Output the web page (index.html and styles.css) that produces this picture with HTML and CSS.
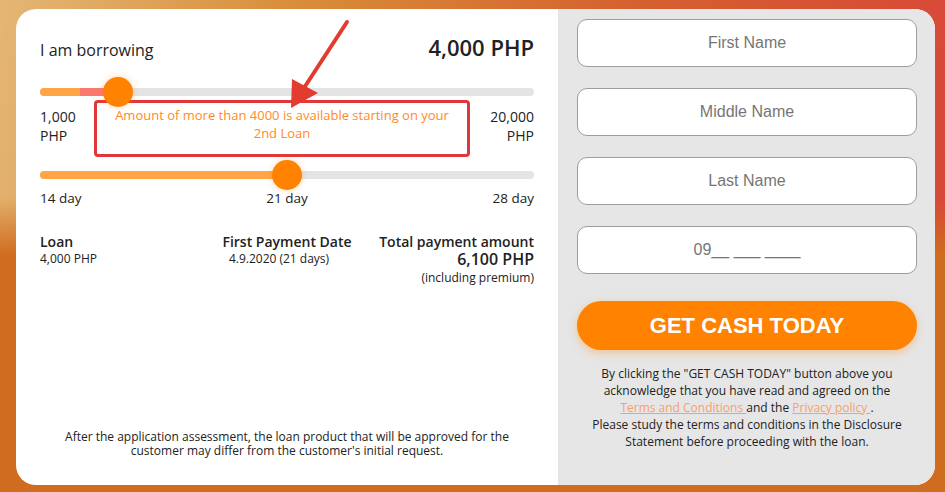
FILE: index.html
```html
<!DOCTYPE html>
<html lang="en">
<head>
    <meta charset="UTF-8">
    <meta name="viewport" content="width=device-width, initial-scale=1.0">
    <title>Loan Calculator</title>
    <link rel="stylesheet" href="styles.css">
</head>
<body>
    <div class="page">
        <div class="card">
            <section class="calc">
                <div class="calc-head">
                    <span>I am borrowing</span>
                    <strong>4,000 PHP</strong>
                </div>

                <div class="slider slider-amount">
                    <div class="fill fill-amount" style="width: 15.8%"></div>
                    <span class="thumb" style="left: 15.8%"></span>
                </div>
                <div class="range-row">
                    <span class="range-label">1,000<br>PHP</span>
                    <p class="notice">Amount of more than 4000 is available starting on your 2nd Loan</p>
                    <span class="range-label right">20,000<br>PHP</span>
                </div>

                <div class="slider slider-days">
                    <div class="fill" style="width: 50%"></div>
                    <span class="thumb" style="left: 50%"></span>
                </div>
                <div class="day-row">
                    <span>14 day</span>
                    <span>21 day</span>
                    <span class="right">28 day</span>
                </div>

                <div class="summary">
                    <div>
                        <h4>Loan</h4>
                        <div class="small">4,000 PHP</div>
                    </div>
                    <div class="center">
                        <h4>First Payment Date</h4>
                        <div class="small date">4.9.2020 (21 days)</div>
                    </div>
                    <div class="right">
                        <h4>Total payment amount</h4>
                        <div class="total">6,100 PHP</div>
                        <div class="small premium">(including premium)</div>
                    </div>
                </div>

                <p class="note">After the application assessment, the loan product that will be approved for the customer may differ from the customer's initial request.</p>
            </section>

            <section class="apply">
                <form class="apply-form">
                    <input type="text" placeholder="First Name">
                    <input type="text" placeholder="Middle Name">
                    <input type="text" placeholder="Last Name">
                    <input type="tel" placeholder="09__ ___ ____">
                    <button type="submit">GET CASH TODAY</button>
                </form>
                <p class="consent">
                    By clicking the "GET CASH TODAY" button above you acknowledge that you have read and agreed on the
                    <a href="#">Terms and Conditions </a>and the <a href="#">Privacy policy </a>.<br>
                    Please study the terms and conditions in the Disclosure Statement before proceeding with the loan.
                </p>
            </section>
        </div>

        <!-- annotation arrow pointing at the notice -->
        <svg class="arrow" width="945" height="492" viewBox="0 0 945 492">
            <line x1="347" y1="22" x2="302" y2="91" stroke="#e23b30" stroke-width="4" stroke-linecap="round"/>
            <polygon points="291,108 292,79 318,93" fill="#e23b30"/>
        </svg>
    </div>
</body>
</html>
```

FILE: styles.css
```css
html, body { height: 100%; }
body {
    margin: 0;
    font-family: "Open Sans", "DejaVu Sans", sans-serif;
    color: #222;
    background:
        linear-gradient(to bottom, rgba(210,110,32,0) 40%, #d06c1f 52%),
        linear-gradient(100deg, #e4b674 0%, #d88c38 30%, #d5602f 62%, #d8443a 100%);
}
.page { position: relative; padding: 9px 10px 7px 16px; }
.card { display: flex; height: 476px; border-radius: 20px; overflow: hidden; background: #fff; }

/* left: calculator */
.calc { width: 542px; box-sizing: border-box; padding: 23px 24px 27px; display: flex; flex-direction: column; }
.calc-head { display: flex; justify-content: space-between; align-items: baseline; line-height: 30px; }
.calc-head span { font-size: 16px; }
.calc-head strong { font-size: 22px; font-weight: 600; }

.slider { position: relative; height: 8px; border-radius: 4px; background: #e4e4e4; }
.slider-amount { margin-top: 23px; }
.slider-days { margin-top: 14px; }
.fill { height: 100%; border-radius: 4px; background: #ffa546; }
.fill-amount { background: linear-gradient(to right, #ffa546 0 40px, #f97a6c 40px); }
.thumb {
    position: absolute; top: 50%; width: 30px; height: 30px; border-radius: 50%;
    background: #ff8200; transform: translate(-50%, -50%);
    box-shadow: 0 0 6px rgba(255,130,0,0.35);
}

.range-row { display: grid; grid-template-columns: 54px 376px 1fr; margin-top: 4px; align-items: start; }
.range-label { font-size: 14px; line-height: 19px; padding-top: 7px; }
.right { text-align: right; }
.center { text-align: center; }
.notice {
    margin: 0; height: 57px; box-sizing: border-box; padding: 3px 8px 0;
    border: 3px solid #e0383a; border-radius: 4px;
    font-size: 13px; line-height: 18px; color: #ff8a1e; text-align: center;
}

.day-row { display: grid; grid-template-columns: 1fr auto 1fr; margin-top: 10px; font-size: 13.5px; line-height: 19px; }

.summary { display: grid; grid-template-columns: 1fr auto 1fr; margin-top: 25px; }
.summary h4 { margin: 0; font-size: 14px; font-weight: 600; line-height: 18px; }
.small { font-size: 12px; line-height: 16px; }
.date { padding-right: 16px; }
.total { font-size: 16px; font-weight: 600; line-height: 16px; }
.premium { margin-top: 3px; }

.note { margin: auto 0 0; padding: 0 15px; font-size: 12px; line-height: 14px; text-align: center; }

/* right: application form */
.apply { flex: 1; background: #e6e6e6; padding: 10px 18px 0 19px; }
.apply-form { display: flex; flex-direction: column; gap: 21px; }
.apply-form input {
    height: 48px; box-sizing: border-box; border: 1px solid #9d9d9d; border-radius: 10px;
    font-family: "Liberation Sans", Arial, sans-serif; font-size: 16px; text-align: center; background: #fff;
}
.apply-form input::placeholder { color: #767676; opacity: 1; }
.apply-form button {
    margin-top: 6px; height: 49px; border: none; border-radius: 25px;
    background: #ff8200; color: #fff; cursor: pointer;
    font-family: "Liberation Sans", Arial, sans-serif; font-size: 22px; font-weight: bold;
    box-shadow: 0 3px 8px rgba(255,130,0,0.35);
}
.consent { margin: 15px 0 0; padding: 0 12px; font-size: 12px; line-height: 17px; text-align: center; }
.consent a { color: #f6a06e; }

.arrow { position: absolute; top: 0; left: 0; pointer-events: none; }
```
